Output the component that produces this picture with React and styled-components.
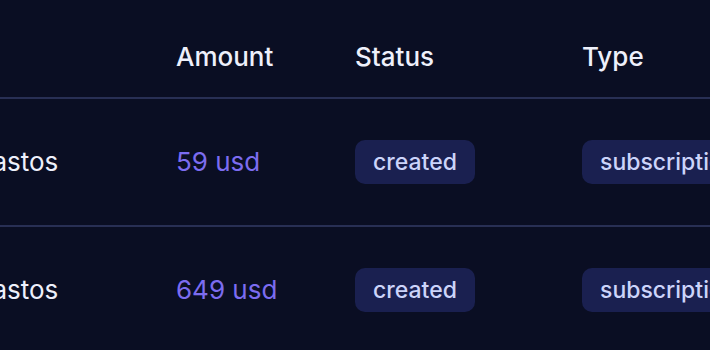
import React from "react";
import styled, { createGlobalStyle } from "styled-components";

const Global = createGlobalStyle`
  html, body {
    margin: 0;
    padding: 0;
    background: #0a0e23;
    overflow: hidden;
  }
  body {
    font-family: Inter, "Noto Sans", "Liberation Sans", sans-serif;
  }
`;

const Page = styled.div`
  width: 710px;
  height: 350px;
  overflow: hidden;
  background: #0a0e23;
`;

const Table = styled.div`
  display: flex;
  flex-direction: column;
  margin-left: -27px;
  width: 900px;
`;

const Row = styled.div`
  display: grid;
  grid-template-columns: 203px 179px 227px 1fr;
  align-items: ${(p) => (p.$header ? "start" : "center")};
  height: ${(p) => (p.$header ? "99px" : "128px")};
  flex-shrink: 0;
  box-sizing: border-box;
  padding-top: ${(p) => (p.$header ? "44px" : "0")};
  border-bottom: 2px solid #282f54;
`;

const HeadCell = styled.div`
  font-size: 26px;
  line-height: 1;
  font-weight: 500;
  color: #eef0fb;
  white-space: nowrap;
`;

const Cell = styled.div`
  font-size: 26px;
  line-height: 1;
  color: ${(p) => (p.$accent ? "#7c6cf0" : "#eef0fb")};
  white-space: nowrap;
`;

const Badge = styled.span`
  display: inline-flex;
  align-items: center;
  height: 44px;
  padding: 0 18px;
  border-radius: 10px;
  background: #1a2050;
  color: #ccd4fa;
  font-size: 23px;
  font-weight: 500;
  line-height: 1;
  white-space: nowrap;
`;

const rows = [
  { name: "Gastos", amount: "59 usd", status: "created", type: "subscription" },
  { name: "Gastos", amount: "649 usd", status: "created", type: "subscription" },
];

export default function App() {
  return (
    <Page>
      <Global />
      <Table>
        <Row $header>
          <HeadCell />
          <HeadCell>Amount</HeadCell>
          <HeadCell>Status</HeadCell>
          <HeadCell>Type</HeadCell>
        </Row>
        {rows.map((r, i) => (
          <Row key={i}>
            <Cell>{r.name}</Cell>
            <Cell $accent>{r.amount}</Cell>
            <div>
              <Badge>{r.status}</Badge>
            </div>
            <div>
              <Badge>{r.type}</Badge>
            </div>
          </Row>
        ))}
      </Table>
    </Page>
  );
}
